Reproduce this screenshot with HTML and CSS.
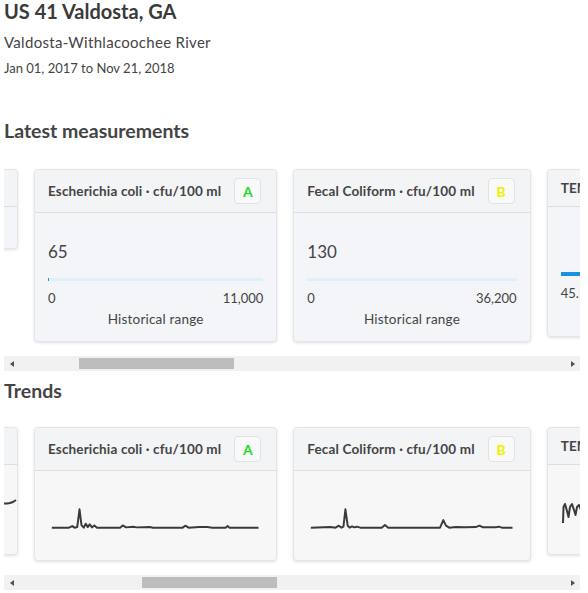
FILE: index.html
```html
<!DOCTYPE html>
<html lang="en">
<head>
    <meta charset="UTF-8">
    <meta name="viewport" content="width=device-width, initial-scale=1.0">
    <title>US 41 Valdosta, GA</title>
    <link rel="stylesheet" href="styles.css">
</head>
<body>
    <div class="page">
        <h1 class="site-title">US 41 Valdosta, GA</h1>
        <div class="site-sub">Valdosta-Withlacoochee River</div>
        <div class="site-dates">Jan 01, 2017 to Nov 21, 2018</div>

        <h2 class="section-title">Latest measurements</h2>
        <div class="scroller">
            <div class="card-row">
                <div class="card card-peek">
                    <div class="card-head"><span class="card-name">Dissolved Oxygen · mg/L</span></div>
                    <div class="card-body"></div>
                </div>

                <div class="card">
                    <div class="card-head">
                        <span class="card-name">Escherichia coli · cfu/100 ml</span>
                        <span class="grade grade-a">A</span>
                    </div>
                    <div class="card-body">
                        <div class="value">65</div>
                        <div class="range-bar"><div class="range-fill" style="width: 1px"></div></div>
                        <div class="range-labels"><span>0</span><span>11,000</span></div>
                        <div class="range-caption">Historical range</div>
                    </div>
                </div>

                <div class="card">
                    <div class="card-head">
                        <span class="card-name">Fecal Coliform · cfu/100 ml</span>
                        <span class="grade grade-b">B</span>
                    </div>
                    <div class="card-body">
                        <div class="value">130</div>
                        <div class="range-bar"><div class="range-fill" style="width: 0px"></div></div>
                        <div class="range-labels"><span>0</span><span>36,200</span></div>
                        <div class="range-caption">Historical range</div>
                    </div>
                </div>

                <div class="card">
                    <div class="card-head"><span class="card-name">TEMPERATURE, WATER · °F</span></div>
                    <div class="card-body">
                        <div class="value">&nbsp;</div>
                        <div class="range-bar range-bar-strong"><div class="range-fill" style="width: 100%"></div></div>
                        <div class="range-labels"><span>45.1</span><span>89.6</span></div>
                        <div class="range-caption">Historical range</div>
                    </div>
                </div>
            </div>
        </div>
        <div class="scrollbar">
            <span class="arrow arrow-left"></span>
            <div class="track"><div class="thumb" style="margin-left: 60px; width: 155px"></div></div>
            <span class="arrow arrow-right"></span>
        </div>

        <h2 class="section-title trends-title">Trends</h2>
        <div class="scroller scroller-trends">
            <div class="card-row">
                <div class="card card-peek">
                    <div class="card-head"><span class="card-name">Dissolved Oxygen · mg/L</span></div>
                    <div class="card-body chart-body">
                        <svg class="spark" viewBox="0 0 200 89" preserveAspectRatio="xMinYMin">
                            <polyline points="176,41 182,39.5 186,38.5 190,38.5 193,38 196,37 199,35"/>
                        </svg>
                    </div>
                </div>

                <div class="card">
                    <div class="card-head">
                        <span class="card-name">Escherichia coli · cfu/100 ml</span>
                        <span class="grade grade-a">A</span>
                    </div>
                    <div class="card-body chart-body">
                        <svg class="spark" viewBox="0 0 244 89" preserveAspectRatio="xMinYMin">
                            <polyline points="17,57.3 34.3,57.3 37.7,55.7 40,57.3 42.7,56.7 45,38.7 47,54.7 49.3,57.3 51.3,53.3 53.3,56.7 55.3,54 57.7,57 60,55 62.7,57.3 86,57.3 88.7,55 92,57 99.3,56.3 102.7,57 116,56.7 119.3,57.3 149.3,57.3 152,55.3 155.3,57.3 166,56.7 174.3,56.7 179.3,57.3 192.7,57.3 194.7,55.7 196.7,57.3 226,57.3"/>
                        </svg>
                    </div>
                </div>

                <div class="card">
                    <div class="card-head">
                        <span class="card-name">Fecal Coliform · cfu/100 ml</span>
                        <span class="grade grade-b">B</span>
                    </div>
                    <div class="card-body chart-body">
                        <svg class="spark" viewBox="0 0 238 89" preserveAspectRatio="xMinYMin">
                            <polyline points="17,57.3 37,56.7 42,57.3 45.3,55.3 48,57.3 50,56.3 52,38.7 54.3,55.3 56.3,57.3 58.7,56 61,57 63.7,56.3 67,57.3 88.7,57.3 92,54.7 95.3,57.3 147.7,57.3 151,49.7 153.7,55.3 157,57.3 163.7,56.7 173.7,57 183.7,56.7 187.7,55.3 191,57 203.7,57 207,56.3 210.3,57.3 221,57.3"/>
                        </svg>
                    </div>
                </div>

                <div class="card">
                    <div class="card-head"><span class="card-name">TEMPERATURE, WATER · °F</span></div>
                    <div class="card-body chart-body">
                        <svg class="spark" viewBox="0 0 200 89" preserveAspectRatio="xMinYMin">
                            <polyline points="15,58 15.5,42 17,39 19,46 20.5,52 22,42 24,39 26,45 27.5,50 29,42 31,40 33,45 35,42 37,44 40,40 43,44 46,41"/>
                        </svg>
                    </div>
                </div>
            </div>
        </div>
        <div class="scrollbar">
            <span class="arrow arrow-left"></span>
            <div class="track"><div class="thumb" style="margin-left: 123px; width: 135px"></div></div>
            <span class="arrow arrow-right"></span>
        </div>
    </div>

    <script>
        // both rows are shown scrolled so the first card only peeks in
        document.querySelectorAll(".scroller").forEach(function (el) {
            el.scrollLeft = 188;
        });
    </script>
</body>
</html>
```

FILE: styles.css
```css
body {
    margin: 0;
    font-family: 'Lato', 'Open Sans', sans-serif;
    color: #444;
    background: #fff;
}

.page {
    width: 576px;
    padding: 0 4px;
}

.site-title {
    margin: 0;
    font-size: 20px;
    line-height: 22px;
    font-weight: 700;
    color: #3a3a3a;
}

.site-sub {
    margin-top: 11px;
    font-size: 15px;
    line-height: 18px;
    letter-spacing: 0.3px;
    color: #444;
}

.site-dates {
    margin-top: 8px;
    font-size: 13px;
    line-height: 18px;
    color: #444;
}

.section-title {
    margin: 42px 0 0;
    font-size: 19.5px;
    line-height: 24px;
    font-weight: 700;
    color: #444;
}

.trends-title {
    margin-top: 8px;
}

.scroller {
    overflow: hidden;
    margin-top: 25px;
}

.scroller-trends {
    margin-top: 23px;
}

.card-row {
    display: flex;
    align-items: flex-start;
    gap: 16px;
    padding: 1px 0 6px;
}

.card {
    flex: none;
    background: #f4f5f8;
    border: 1px solid #e4e5e8;
    border-radius: 4px;
    box-shadow: 0 1px 3px rgba(0, 0, 0, 0.12);
}

.card-peek {
    width: 200px;
}

.card-head {
    display: flex;
    align-items: center;
    gap: 13px;
    min-height: 20px;
    padding: 8px 15px 8px 13px;
    background: #f3f4f6;
    border-bottom: 1px solid #dcdde0;
    border-radius: 4px 4px 0 0;
}

.card-name {
    font-size: 13.5px;
    font-weight: 700;
    letter-spacing: 0.15px;
    color: #444;
    white-space: nowrap;
}

.grade {
    display: flex;
    align-items: center;
    justify-content: center;
    width: 25px;
    height: 24px;
    background: #f9f9f9;
    border: 1px solid #e2e2e2;
    border-radius: 4px;
    font-size: 14px;
    font-weight: 700;
}

.grade-a {
    color: #1fdc2a;
}

.grade-b {
    color: #f0f000;
}

.card-body {
    padding: 28px 13px 13px;
}

.value {
    font-size: 17px;
    line-height: 22px;
    color: #444;
}

.range-bar {
    margin-top: 15px;
    height: 3px;
    background: #ddf0fc;
}

.range-fill {
    height: 100%;
    background: #1a92e2;
}

.range-bar-strong {
    height: 4px;
    border-radius: 2px;
}

.range-labels {
    display: flex;
    justify-content: space-between;
    margin-top: 9px;
    font-size: 13px;
    line-height: 16px;
}

.range-caption {
    margin-top: 4px;
    text-align: center;
    font-size: 13.5px;
    line-height: 18px;
    letter-spacing: 0.2px;
}

.chart-body {
    width: 0;
    min-width: 100%;
    height: 89px;
    padding: 0;
    background: #f7f7f8;
    border-radius: 0 0 4px 4px;
}

.spark {
    display: block;
    width: 100%;
    height: 89px;
}

.spark polyline {
    fill: none;
    stroke: #3a3a3a;
    stroke-width: 2;
    stroke-linejoin: round;
}

.scrollbar {
    display: flex;
    align-items: center;
    height: 15px;
    margin-top: 8px;
    background: #f1f1f1;
}

.arrow {
    flex: none;
    width: 15px;
    display: flex;
    justify-content: center;
}

.arrow::before {
    content: "";
    border-top: 3px solid transparent;
    border-bottom: 3px solid transparent;
}

.arrow-left::before {
    border-right: 4px solid #505050;
}

.arrow-right::before {
    border-left: 4px solid #505050;
}

.track {
    flex: 1;
    display: flex;
    align-items: center;
}

.thumb {
    height: 11px;
    background: #bdbdbd;
}
```
